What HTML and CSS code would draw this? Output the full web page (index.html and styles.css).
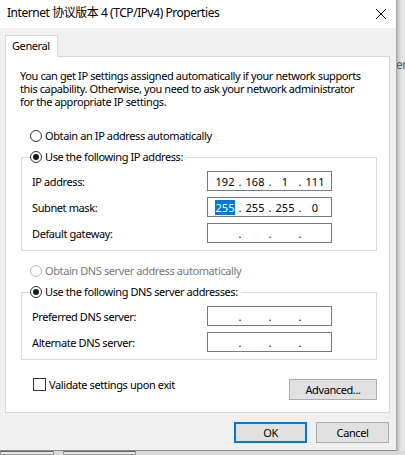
FILE: index.html
```html
<!DOCTYPE html>
<html>
<head>
<meta charset="utf-8">
<link rel="stylesheet" href="styles.css">
</head>
<body>
<div class="window">
  <div class="titlebar">
    <span class="title">Internet 协议版本 4 (TCP/IPv4) Properties</span>
    <svg class="close" width="12" height="12" viewBox="0 0 12 12"><path d="M1 1L11 11M11 1L1 11" stroke="#000" stroke-width="1" fill="none"/></svg>
  </div>
  <div class="content">
    <div class="tabs"><div class="tab">General</div></div>
    <div class="panel">
      <p class="desc">You can get IP settings assigned automatically if your network supports<br>this capability. Otherwise, you need to ask your network administrator<br>for the appropriate IP settings.</p>
      <div class="option first"><span class="radio"></span><span>Obtain an IP address automatically</span></div>
      <fieldset class="group">
        <legend class="option"><span class="radio checked"></span><span>Use the following IP address:</span></legend>
        <div class="rows">
          <div class="row"><span class="label">IP address:</span>
            <div class="ipbox"><span class="seg">192</span><span class="dot">.</span><span class="seg">168</span><span class="dot">.</span><span class="seg">1</span><span class="dot">.</span><span class="seg">111</span></div>
          </div>
          <div class="row"><span class="label">Subnet mask:</span>
            <div class="ipbox"><span class="seg"><span class="sel">255</span></span><span class="dot">.</span><span class="seg">255</span><span class="dot">.</span><span class="seg">255</span><span class="dot">.</span><span class="seg">0</span></div>
          </div>
          <div class="row"><span class="label">Default gateway:</span>
            <div class="ipbox"><span class="seg"></span><span class="dot">.</span><span class="seg"></span><span class="dot">.</span><span class="seg"></span><span class="dot">.</span><span class="seg"></span></div>
          </div>
        </div>
      </fieldset>
      <div class="option disabled"><span class="radio"></span><span>Obtain DNS server address automatically</span></div>
      <fieldset class="group">
        <legend class="option"><span class="radio checked"></span><span>Use the following DNS server addresses:</span></legend>
        <div class="rows">
          <div class="row"><span class="label">Preferred DNS server:</span>
            <div class="ipbox"><span class="seg"></span><span class="dot">.</span><span class="seg"></span><span class="dot">.</span><span class="seg"></span><span class="dot">.</span><span class="seg"></span></div>
          </div>
          <div class="row"><span class="label">Alternate DNS server:</span>
            <div class="ipbox"><span class="seg"></span><span class="dot">.</span><span class="seg"></span><span class="dot">.</span><span class="seg"></span><span class="dot">.</span><span class="seg"></span></div>
          </div>
        </div>
      </fieldset>
      <div class="bottomrow">
        <div class="check"><span class="box"></span><span>Validate settings upon exit</span></div>
        <div class="btn advanced">Advanced...</div>
      </div>
    </div>
    <div class="footer">
      <div class="btn default">OK</div>
      <div class="btn">Cancel</div>
    </div>
  </div>
</div>
<div class="side"><span class="side-text">er</span></div>
<div class="under">
  <div class="under-btn w1"></div>
  <div class="under-btn w2"></div>
</div>
<div class="corner"></div>
</body>
</html>
```
FILE: styles.css
```css
* { box-sizing: border-box; }
html, body { margin: 0; padding: 0; }
body {
  width: 405px;
  height: 455px;
  overflow: hidden;
  display: grid;
  grid-template-columns: 397px 8px;
  grid-template-rows: 451px 4px;
  background: #dcdcdc;
  font-family: "Noto Sans", "Noto Sans CJK SC", sans-serif;
  font-size: 11px;
  letter-spacing: -0.4px;
  color: #000;
  white-space: nowrap;
}
.window {
  background: #f0f0f0;
  border-right: 1px solid #a8a8a8;
  border-bottom: 1px solid #8a8a8a;
  display: flex;
  flex-direction: column;
}
.titlebar {
  height: 28px;
  background: #fff;
  display: flex;
  align-items: center;
  justify-content: space-between;
  padding: 0 9px 2px 7px;
}
.title { font-size: 12px; line-height: 16px; letter-spacing: -0.45px; }
.close { display: block; margin-top: 1px; }
.content { padding: 7px 7px 0 5px; }
.tabs { display: flex; }
.tab {
  position: relative;
  width: 53px;
  height: 22px;
  margin-bottom: -1px;
  background: #fff;
  border: 1px solid #d9d9d9;
  border-bottom: none;
  padding: 2px 0 0 6px;
  line-height: 16px;
}
.panel {
  width: 385px;
  height: 357px;
  background: #fff;
  border: 1px solid #d9d9d9;
  padding: 12px 11px 0 14px;
}
.desc { margin: 0; line-height: 13px; }
.option {
  display: flex;
  align-items: center;
  gap: 3px;
  height: 14px;
  line-height: 14px;
}
.option.first { margin: 21px 0 0 10px; }
.option.disabled { margin: 13px 0 0 10px; color: #7a7a7a; }
.radio {
  width: 12px;
  height: 12px;
  border: 1px solid #333;
  border-radius: 50%;
  background: #fff;
  display: flex;
  align-items: center;
  justify-content: center;
  flex: none;
}
.radio.checked::after {
  content: "";
  width: 6px;
  height: 6px;
  border-radius: 50%;
  background: #1a1a1a;
}
.option.disabled .radio { border-color: #bcbcbc; }
.group {
  margin: 7px 0 0 1px;
  width: 356px;
  padding: 0;
  border: 1px solid #dcdcdc;
  min-width: 0;
}
.group legend {
  padding: 0 3px 0 0;
  margin-left: 8px;
}
.rows {
  padding: 7px 44px 7px 10px;
  display: flex;
  flex-direction: column;
  gap: 6px;
}
.row {
  display: flex;
  align-items: center;
  height: 20px;
}
.label { width: 175px; }
.ipbox {
  width: 125px;
  height: 20px;
  border: 1px solid #7a7a7a;
  display: flex;
  align-items: center;
  padding-left: 5px;
  letter-spacing: 0;
}
.seg { width: 24px; text-align: center; line-height: 15px; }
.dot { width: 6px; text-align: center; line-height: 15px; }
.sel { background: #0078d7; color: #fff; display: inline-block; padding: 0 1px; }
.bottomrow {
  margin-top: 18px;
  display: flex;
  justify-content: space-between;
  align-items: flex-start;
}
.check {
  display: flex;
  align-items: center;
  gap: 3px;
  margin-left: 13px;
  height: 13px;
}
.box {
  width: 13px;
  height: 13px;
  border: 1px solid #333;
  background: #fff;
}
.btn {
  width: 73px;
  height: 21px;
  background: #e1e1e1;
  border: 1px solid #adadad;
  display: flex;
  align-items: center;
  justify-content: center;
}
.btn.advanced { width: 88px; margin: 1px 1px 0 0; }
.btn.default { border: 2px solid #0078d7; }
.footer {
  margin-top: 9px;
  display: flex;
  justify-content: flex-end;
  gap: 9px;
}
.side {
  background: linear-gradient(to right, #b9b9b9 0, #cfcfcf 2px, #e4e4e4 4px);
  padding-top: 56px;
  overflow: hidden;
}
.side-text { display: block; font-size: 12px; color: #555; margin-left: -1px; }
.under {
  background: #d8d8d8;
  display: flex;
  gap: 9px;
}
.under-btn { height: 4px; background: #e6e6e6; border: 1px solid #9a9a9a; border-top-color: #666; }
.w1 { width: 54px; }
.w2 { width: 73px; }
.corner { background: #d8d8d8; }
```
